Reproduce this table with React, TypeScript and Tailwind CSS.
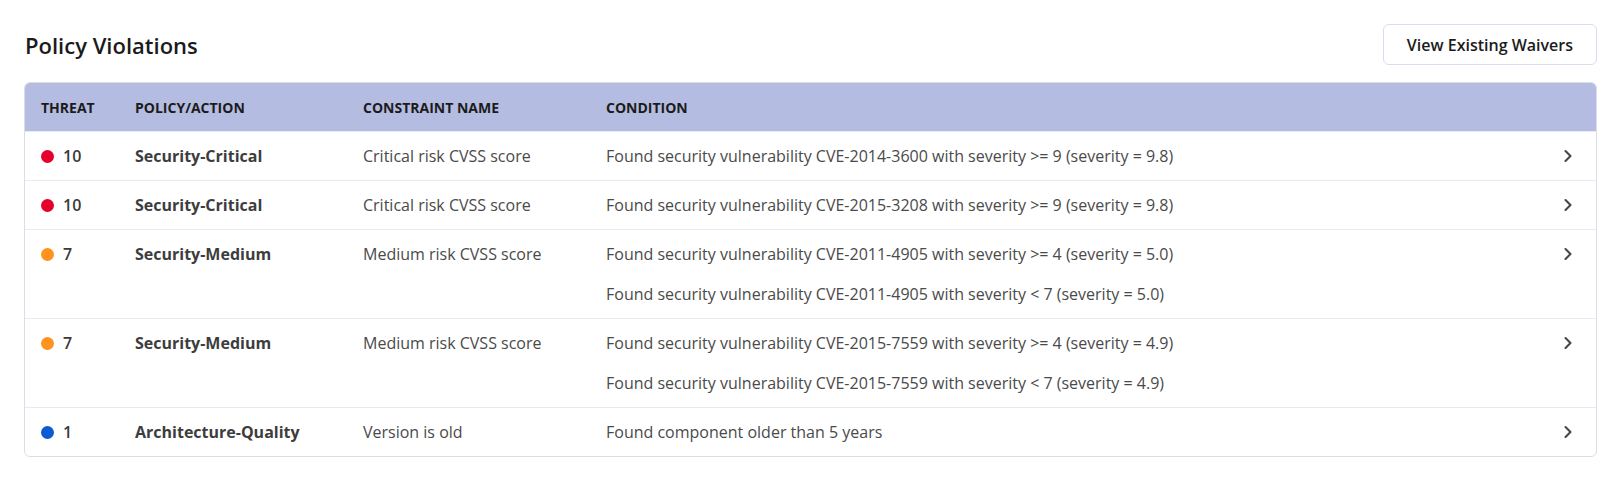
import { ChevronRight } from "lucide-react";

type Violation = {
  threat: number;
  color: string;
  policy: string;
  constraint: string;
  conditions: string[];
};

const violations: Violation[] = [
  {
    threat: 10,
    color: "bg-[#e5002d]",
    policy: "Security-Critical",
    constraint: "Critical risk CVSS score",
    conditions: ["Found security vulnerability CVE-2014-3600 with severity >= 9 (severity = 9.8)"],
  },
  {
    threat: 10,
    color: "bg-[#e5002d]",
    policy: "Security-Critical",
    constraint: "Critical risk CVSS score",
    conditions: ["Found security vulnerability CVE-2015-3208 with severity >= 9 (severity = 9.8)"],
  },
  {
    threat: 7,
    color: "bg-[#ff931f]",
    policy: "Security-Medium",
    constraint: "Medium risk CVSS score",
    conditions: [
      "Found security vulnerability CVE-2011-4905 with severity >= 4 (severity = 5.0)",
      "Found security vulnerability CVE-2011-4905 with severity < 7 (severity = 5.0)",
    ],
  },
  {
    threat: 7,
    color: "bg-[#ff931f]",
    policy: "Security-Medium",
    constraint: "Medium risk CVSS score",
    conditions: [
      "Found security vulnerability CVE-2015-7559 with severity >= 4 (severity = 4.9)",
      "Found security vulnerability CVE-2015-7559 with severity < 7 (severity = 4.9)",
    ],
  },
  {
    threat: 1,
    color: "bg-[#0b5bd3]",
    policy: "Architecture-Quality",
    constraint: "Version is old",
    conditions: ["Found component older than 5 years"],
  },
];

export default function App() {
  return (
    <div className="min-h-[477px] bg-white pl-6 pr-[23px] pt-6 font-['Open_Sans',sans-serif]">
      <div className="flex items-center justify-between mb-[17px]">
        <h2 className="text-[22px] font-semibold text-[#1b1b1b] pl-px mt-[2px]">Policy Violations</h2>
        <button className="h-[41px] px-[23px] rounded-md border border-[#dadcef] bg-white text-[16px] font-semibold text-[#1b1b1b]">
          View Existing Waivers
        </button>
      </div>

      <div className="rounded-md border border-[#dcdce9] overflow-hidden">
        <div className="flex items-center h-12 bg-[#b5bce1] text-[14px] font-bold uppercase text-[#1b1b1b]">
          <div className="w-[110px] pl-4">Threat</div>
          <div className="w-[228px]">Policy/Action</div>
          <div className="w-[243px]">Constraint Name</div>
          <div className="flex-1">Condition</div>
        </div>

        {violations.map((v, i) => (
          <div
            key={i}
            className="flex items-start py-3 leading-6 text-[16px] text-[#4a4a4a] border-t border-[#e9e9f3] first:border-t-0"
          >
            <div className="w-[110px] pl-4 flex items-center gap-[9px]">
              <span className={`w-[13px] h-[13px] rounded-full ${v.color}`} />
              <span className="font-semibold text-[#3a3a3a]">{v.threat}</span>
            </div>
            <div className="w-[228px] font-bold text-[#3d3d3d]">{v.policy}</div>
            <div className="w-[243px]">{v.constraint}</div>
            <div className="flex-1 flex flex-col gap-4">
              {v.conditions.map((c, j) => (
                <div key={j}>{c}</div>
              ))}
            </div>
            <div className="pr-[18px] pt-[2px]">
              <ChevronRight size={20} strokeWidth={2.5} className="text-[#454545]" />
            </div>
          </div>
        ))}
      </div>
    </div>
  );
}
